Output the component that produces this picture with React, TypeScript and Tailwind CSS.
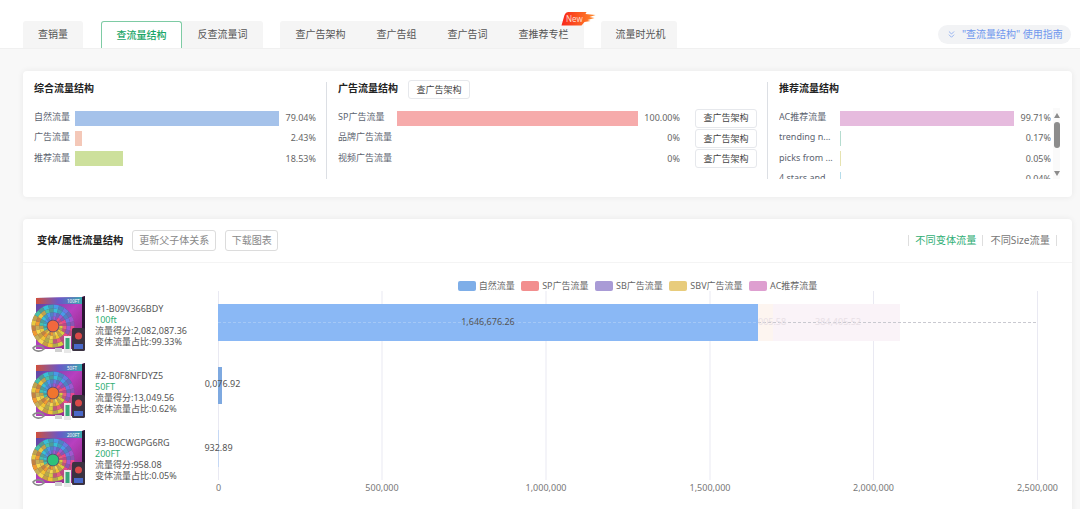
import { ChevronsDown } from "lucide-react";

const fontStack = "font-['Noto_Sans','Noto_Sans_CJK_SC',sans-serif]";

const overall = [
  { label: "自然流量", pct: "79.04%", width: 204, color: "bg-[#a5c2ea]" },
  { label: "广告流量", pct: "2.43%", width: 7, color: "bg-[#f4c8b8]" },
  { label: "推荐流量", pct: "18.53%", width: 48, color: "bg-[#cde09c]" },
];

const ads = [
  { label: "SP广告流量", pct: "100.00%", width: 241, color: "bg-[#f6abab]" },
  { label: "品牌广告流量", pct: "0%", width: 0, color: "bg-[#f6abab]" },
  { label: "视频广告流量", pct: "0%", width: 0, color: "bg-[#f6abab]" },
];

const recommend = [
  { label: "AC推荐流量", pct: "99.71%", width: 174, color: "bg-[#e6bbde]" },
  { label: "trending n...", pct: "0.17%", width: 1, color: "bg-[#b5dccf]" },
  { label: "picks from ...", pct: "0.05%", width: 1, color: "bg-[#e6e3b0]" },
  { label: "4 stars and ...", pct: "0.04%", width: 1, color: "bg-[#b5dcea]" },
];

const legend = [
  { label: "自然流量", color: "bg-[#7eaee8]" },
  { label: "SP广告流量", color: "bg-[#f28e8e]" },
  { label: "SB广告流量", color: "bg-[#a99bd6]" },
  { label: "SBV广告流量", color: "bg-[#e8cc7c]" },
  { label: "AC推荐流量", color: "bg-[#de9fd0]" },
];

const products = [
  { id: "#1-B09V366BDY", size: "100ft", score: "流量得分:2,082,087.36", share: "变体流量占比:99.33%", hub: "#f2683c", tag: "100FT" },
  { id: "#2-B0F8NFDYZ5", size: "50FT", score: "流量得分:13,049.56", share: "变体流量占比:0.62%", hub: "#f0742e", tag: "50FT" },
  { id: "#3-B0CWGPG6RG", size: "200FT", score: "流量得分:958.08", share: "变体流量占比:0.05%", hub: "#2fc27a", tag: "200FT" },
];

const axis = [
  { x: 218.5, label: "0" },
  { x: 382, label: "500,000" },
  { x: 546, label: "1,000,000" },
  { x: 710, label: "1,500,000" },
  { x: 873.5, label: "2,000,000" },
  { x: 1037.5, label: "2,500,000" },
];

// clockwise from 3 o'clock
const ringColors = ["#e84a8c", "#e8607a", "#d8d040", "#f2c230", "#f5d850", "#f09a30", "#e8c840", "#48c0a8", "#38c0d8", "#4a9ae8", "#6a78e0", "#a058d0"];
const segments = Array.from({ length: 24 }, (_, i) => i);

function Ring({ r, width, shift }: { r: number; width: number; shift: number }) {
  const length = 2 * Math.PI * r;
  const part = length / segments.length;
  return (
    <g>
      {segments.map((i) => (
        <circle
          key={i}
          cx="22"
          cy="31"
          r={r}
          fill="none"
          stroke={ringColors[(Math.floor(i / 2) + shift) % 12]}
          strokeOpacity={i % 2 ? 0.7 : 1}
          strokeWidth={width}
          strokeDasharray={`${part} ${length - part}`}
          strokeDashoffset={-part * i}
        />
      ))}
    </g>
  );
}

function LedBox({ hub, tag }: { hub: string; tag: string }) {
  return (
    <svg width="58" height="60" viewBox="0 0 58 60" className="shrink-0">
      <defs>
        <linearGradient id="boxTop" x1="0" x2="1" y1="0" y2="0">
          <stop offset="0" stopColor="#d0503c" />
          <stop offset="0.5" stopColor="#6a58c8" />
          <stop offset="1" stopColor="#38a8b0" />
        </linearGradient>
        <linearGradient id="boxFace" x1="0" x2="1" y1="0" y2="1">
          <stop offset="0" stopColor="#4a4aa0" />
          <stop offset="0.5" stopColor="#b840c0" />
          <stop offset="1" stopColor="#802068" />
        </linearGradient>
        <filter id="soft">
          <feGaussianBlur stdDeviation="0.45" />
        </filter>
      </defs>
      <g filter="url(#soft)">
        <path d="M5 3L51 2L54 1V52L51 54H5Z" fill="url(#boxFace)" />
        <path d="M5 3L51 2V9H5Z" fill="url(#boxTop)" />
        <path d="M51 2L54 1V52L51 54Z" fill="#2c1430" />
        <circle cx="22" cy="31" r="21.5" fill="#584a70" />
        <Ring r={19.5} width={4} shift={0} />
        <Ring r={15.5} width={4} shift={11} />
        <Ring r={11.5} width={4} shift={1} />
        <Ring r={8} width={3.4} shift={2} />
        <circle cx="22" cy="31" r="5.5" fill={hub} />
        <rect x="41" y="33" width="13" height="23" rx="1.5" fill="#3a3040" />
        <circle cx="47.5" cy="41" r="3.5" fill="#d84848" />
        <rect x="43" y="49" width="9" height="5" fill="#4868c8" />
        <rect x="33" y="41" width="7" height="17" fill="#e8e8e8" />
        <rect x="34.5" y="43" width="4" height="11" fill="#38a878" />
        <path d="M2 53C4 50 11 50 13 54C10 57 4 57 2 53Z" fill="none" stroke="#8a8a8a" strokeWidth="1.6" />
        <rect x="24" y="53" width="7" height="4" fill="#d0d0d0" />
      </g>
      <text x="36" y="7.5" fontSize="4.5" fill="#ffffff">{tag}</text>
    </svg>
  );
}

function Bar({ label, pct, width, color, track, pctW }: { label: string; pct: string; width: number; color: string; track: number; pctW: number }) {
  return (
    <div className="flex h-[20.33px] items-center text-[9px] text-[#5c6470]">
      <span className="mb-[3px] shrink-0 truncate" style={{ width: track }}>{label}</span>
      <div className={`h-[15px] shrink-0 ${color}`} style={{ width }} />
      <span className="ml-auto mb-[1px] text-right text-[#666]" style={{ width: pctW }}>{pct}</span>
    </div>
  );
}

function SmallButton({ text }: { text: string }) {
  return (
    <button className="flex h-[19px] w-[62px] items-center justify-center rounded-[3px] border border-[#e6e8ec] bg-white text-[9px] text-[#444]">
      {text}
    </button>
  );
}

function Tab({ text, className }: { text: string; className: string }) {
  return <div className={`flex items-center justify-center bg-[#f5f5f5] text-[10px] text-[#555] ${className}`}>{text}</div>;
}

export default function App() {
  return (
    <div className={`h-[509px] w-[1080px] overflow-hidden bg-[#f8f8f8] ${fontStack}`}>
      {/* tabs */}
      <div className="flex h-[49px] items-end border-b border-[#f0f0f0] bg-white pl-[23px]">
        <div className="flex h-[27px] w-full items-stretch">
          <Tab text="查销量" className="w-[60px] rounded-t-[3px]" />
          <div className="ml-[18px] flex w-[81px] items-center justify-center rounded-t-[3px] border border-b-0 border-[#7ecba4] bg-white text-[10px] font-medium text-[#17a566]">
            查流量结构
          </div>
          <Tab text="反查流量词" className="w-[81px] rounded-tr-[3px]" />
          <div className="ml-[17px] flex w-[304px] rounded-t-[3px] bg-[#f5f5f5] text-[10px] text-[#555]">
            <div className="flex w-[81px] items-center justify-center">查广告架构</div>
            <div className="flex w-[71px] items-center justify-center">查广告组</div>
            <div className="flex w-[71px] items-center justify-center">查广告词</div>
            <div className="relative flex w-[81px] items-center justify-center">
              查推荐专栏
              <span className="absolute left-[58px] top-[-9px] h-[14px] w-[37px]">
                <svg width="37" height="14" viewBox="0 0 36 14" className="absolute left-0 top-0">
                  <defs>
                    <linearGradient id="flame" x1="0" x2="1" y1="0" y2="0">
                      <stop offset="0" stopColor="#f8261a" />
                      <stop offset="1" stopColor="#ff8a2a" />
                    </linearGradient>
                  </defs>
                  <path d="M3 3C4 1 5 0 7 0H25L24 2L34 3L28 5L33 6L26 8L29 9L23 10L20 13.5H0Z" fill="url(#flame)" />
                </svg>
                <span className="absolute left-[5px] top-[1px] text-[8px] leading-[11px] text-[#ffd9c8]">New</span>
              </span>
            </div>
          </div>
          <Tab text="流量时光机" className="ml-[17px] w-[76px] rounded-t-[3px] pl-[3px]" />
          <div className="ml-[261px] mt-[4px] flex h-[19px] w-[133px] items-center rounded-full bg-[#f2f3f5] pl-[8px] text-[10px] text-[#6f97ee]">
            <ChevronsDown size={11} strokeWidth={1.5} className="mr-[5px] shrink-0" />
            <span className="whitespace-nowrap">"查流量结构" 使用指南</span>
          </div>
        </div>
      </div>

      <div className="flex flex-col gap-[22px] pl-[23px] pr-[8px] pt-[22px]">
        {/* overview card */}
        <div className="flex h-[126px] rounded-[4px] bg-white pl-[11px] pt-[11px] shadow-[0_0_6px_rgba(0,0,0,0.07)]">
          <div className="h-[97px] w-[293px] shrink-0 border-r border-[#dcdfe4] pr-[10px]">
            <div className="flex h-[26px] items-start text-[10px] font-bold leading-[13px] text-[#222]">综合流量结构</div>
            {overall.map((r) => (
              <Bar key={r.label} {...r} track={41} pctW={40} />
            ))}
          </div>
          <div className="h-[97px] w-[441px] shrink-0 border-r border-[#dcdfe4] pl-[11px]">
            <div className="flex h-[26px] items-start gap-[10px] text-[10px] font-bold leading-[13px] text-[#222]">
              <span>广告流量结构</span>
              <div className="-mt-[2px] font-normal">
                <SmallButton text="查广告架构" />
              </div>
            </div>
            {ads.map((r) => (
              <div key={r.label} className="flex items-center">
                <div className="w-[342px]">
                  <Bar {...r} track={59} pctW={40} />
                </div>
                <div className="ml-[15px]">
                  <SmallButton text="查广告架构" />
                </div>
              </div>
            ))}
          </div>
          <div className="h-[97px] w-[293px] shrink-0 pl-[11px]">
            <div className="flex h-[26px] items-start text-[10px] font-bold leading-[13px] text-[#222]">推荐流量结构</div>
            <div className="flex h-[71px] w-[281px]">
              <div className="w-[272px] overflow-hidden">
                {recommend.map((r) => (
                  <Bar key={r.pct} {...r} track={61} pctW={36} />
                ))}
              </div>
              <div className="ml-[2px] flex w-[7px] flex-col items-center bg-[#fafafa]">
                <div className="mt-[5px] h-0 w-0 border-x-[3.5px] border-b-[5px] border-x-transparent border-b-[#8c8c8c]" />
                <div className="mt-[4px] h-[26px] w-[6px] rounded-[3px] bg-[#8c8c8c]" />
                <div className="mt-[23px] h-0 w-0 border-x-[3.5px] border-t-[5px] border-x-transparent border-t-[#8c8c8c]" />
              </div>
            </div>
          </div>
        </div>

        {/* variant card */}
        <div className="h-[300px] rounded-[4px] bg-white shadow-[0_0_6px_rgba(0,0,0,0.07)]">
          <div className="flex h-[44px] items-center border-b border-[#f4f4f4] pl-[14px] pr-[15px]">
            <span className="text-[10.25px] font-bold text-[#222]">变体/属性流量结构</span>
            <button className="ml-[9px] h-[21px] w-[84px] rounded-[3px] border border-[#dcdcdc] text-[10px] text-[#888]">更新父子体关系</button>
            <button className="ml-[9px] h-[21px] w-[53px] rounded-[3px] border border-[#dcdcdc] text-[10px] text-[#888]">下载图表</button>
            <div className="ml-auto flex items-center text-[10.2px] leading-[11px]">
              <span className="border-x border-[#dedede] px-[6px] text-[#2fae74]">不同变体流量</span>
              <span className="border-r border-[#dedede] pl-[7px] pr-[6px] text-[#777]">不同Size流量</span>
            </div>
          </div>

          <div className="flex justify-center gap-[6.5px] pl-[180px] pt-[18px] text-[9px] leading-[10px] text-[#666]">
            {legend.map((l) => (
              <div key={l.label} className="flex items-center gap-[3px]">
                <span className={`h-[10px] w-[18px] rounded-[2px] ${l.color}`} />
                <span>{l.label}</span>
              </div>
            ))}
          </div>

          <div className="flex">
            <div className="w-[167px] shrink-0">
              {products.map((p) => (
                <div key={p.id} className="flex h-[67px] items-center gap-[6px] pl-[8px]">
                  <LedBox hub={p.hub} tag={p.tag} />
                  <div className="whitespace-nowrap text-[9px] leading-[11px] text-[#555]">
                    <div>{p.id}</div>
                    <div className="text-[#2fae74]">{p.size}</div>
                    <div>{p.score}</div>
                    <div>{p.share}</div>
                  </div>
                </div>
              ))}
            </div>
            <svg width="882" height="218" viewBox="190 291 882 218" className="shrink-0 overflow-visible">
              {axis.map((a) => (
                <line key={a.x} x1={a.x} x2={a.x} y1="291" y2="480" stroke="#e9e9f2" strokeWidth="1" />
              ))}
              <rect x="218" y="304" width="540" height="37" fill="#8ab8f5" />
              <rect x="758" y="304" width="15" height="37" fill="#fdf5f0" />
              <rect x="773" y="304" width="127" height="37" fill="#faf3f8" />
              <rect x="218" y="367" width="4" height="37" fill="#7ea9e0" />
              <rect x="218" y="430" width="1" height="37" fill="#c5d8f5" />
              <line x1="218" x2="758" y1="322.5" y2="322.5" stroke="#a4c8f6" strokeDasharray="3 2" />
              <line x1="758" x2="1038" y1="322.5" y2="322.5" stroke="#c9c9d0" strokeDasharray="3 2" />
              <g fontSize="9" fill="#555">
                <text x="488" y="325" textAnchor="middle">1,646,676.26</text>
                <text x="222.5" y="387" textAnchor="middle">0,076.92</text>
                <text x="218.5" y="451" textAnchor="middle">932.89</text>
              </g>
              <g fontSize="9" fill="#e8e0e6">
                <text x="758" y="325">005.58</text>
                <text x="815" y="325">384,405.52</text>
              </g>
              <g fontSize="9" fill="#777">
                {axis.map((a) => (
                  <text key={a.label} x={a.x} y="491" textAnchor="middle">{a.label}</text>
                ))}
              </g>
            </svg>
          </div>
        </div>
      </div>
    </div>
  );
}
